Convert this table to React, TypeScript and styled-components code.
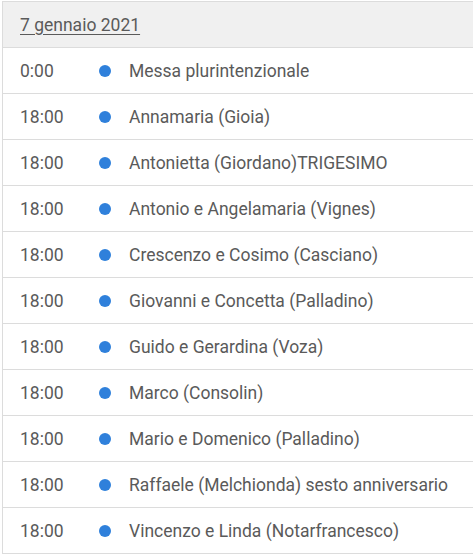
import styled, { createGlobalStyle } from "styled-components";

const GlobalStyle = createGlobalStyle`
  html, body {
    margin: 0;
    padding: 0;
    background: #ffffff;
    overflow: hidden;
  }
  body {
    font-family: Roboto, "Liberation Sans", sans-serif;
  }
`;

const Wrapper = styled.div`
  padding: 1px 0 0 2px;
`;

const Table = styled.div`
  border-top: 1px solid #dcdcdc;
  border-left: 1px solid #dcdcdc;
  width: 480px;
`;

const Header = styled.div`
  height: 45px;
  display: flex;
  align-items: center;
  padding-left: 17px;
  background-color: #f0f0f0;
  border-bottom: 1px solid #dcdcdc;
  font-size: 17.5px;
  color: #5a5a5a;

  span {
    text-decoration: underline;
    text-underline-offset: 3px;
  }
`;

const Row = styled.div`
  height: 45px;
  display: grid;
  grid-template-columns: 79px 30px 1fr;
  align-items: center;
  padding-left: 17px;
  border-bottom: 1px solid #dcdcdc;
  font-size: 17.5px;
  color: #5a5a5a;
`;

const Dot = styled.span`
  width: 12px;
  height: 12px;
  border-radius: 50%;
  background-color: #2f80db;
`;

const entries: [string, string][] = [
  ["0:00", "Messa plurintenzionale"],
  ["18:00", "Annamaria (Gioia)"],
  ["18:00", "Antonietta (Giordano)TRIGESIMO"],
  ["18:00", "Antonio e Angelamaria (Vignes)"],
  ["18:00", "Crescenzo e Cosimo (Casciano)"],
  ["18:00", "Giovanni e Concetta (Palladino)"],
  ["18:00", "Guido e Gerardina (Voza)"],
  ["18:00", "Marco (Consolin)"],
  ["18:00", "Mario e Domenico (Palladino)"],
  ["18:00", "Raffaele (Melchionda) sesto anniversario"],
  ["18:00", "Vincenzo e Linda (Notarfrancesco)"],
];

const App = () => {
  return (
    <Wrapper>
      <GlobalStyle />
      <Table>
        <Header>
          <span>7 gennaio 2021</span>
        </Header>
        {entries.map(([time, name], i) => (
          <Row key={i}>
            <span>{time}</span>
            <Dot />
            <span>{name}</span>
          </Row>
        ))}
      </Table>
    </Wrapper>
  );
};

export default App;
